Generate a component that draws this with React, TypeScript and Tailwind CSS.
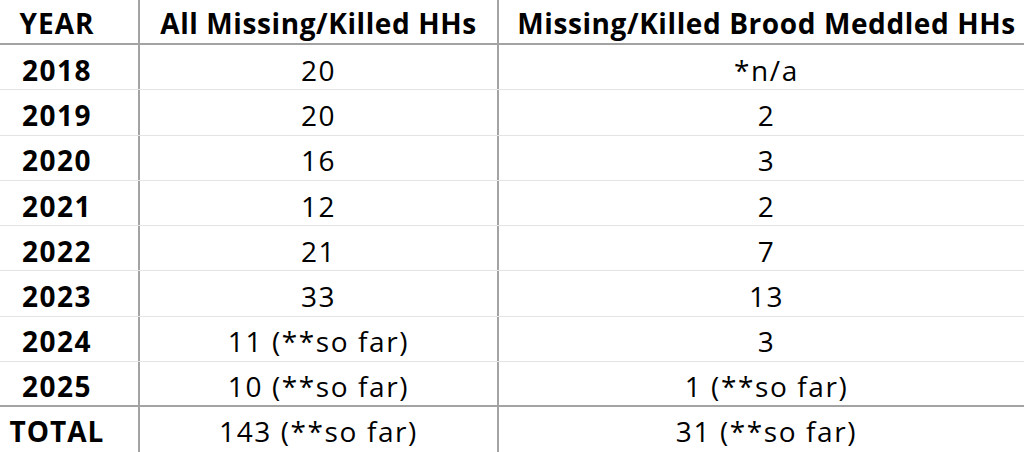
import React from "react";

const rows: [string, string, string][] = [
  ["2018", "20", "*n/a"],
  ["2019", "20", "2"],
  ["2020", "16", "3"],
  ["2021", "12", "2"],
  ["2022", "21", "7"],
  ["2023", "33", "13"],
  ["2024", "11 (**so far)", "3"],
  ["2025", "10 (**so far)", "1 (**so far)"],
];

export default function App() {
  return (
    <div
      className="w-[1024px] h-[452px] bg-white text-black overflow-hidden flex flex-col"
      style={{ fontFamily: '"Open Sans", Lato, sans-serif' }}
    >
      <div className="flex h-[45px] border-b-2 border-[#a3a3a3] font-bold text-[28px] leading-none tracking-[0.6px]">
        <div className="w-[140px] shrink-0 border-r-2 border-[#a3a3a3] flex items-center justify-center pr-[24px] pt-[3px] tracking-[1px]">YEAR</div>
        <div className="w-[359px] shrink-0 border-r-2 border-[#a3a3a3] flex items-center justify-center pt-[3px]">All Missing/Killed HHs</div>
        <div className="flex-1 flex items-center justify-center pl-[10px] pt-[3px]">Missing/Killed Brood Meddled HHs</div>
      </div>
      {rows.map((r, i) => (
        <div
          key={r[0]}
          className={`flex h-[45.3px] text-[28px] leading-none ${i === rows.length - 1 ? "border-b-2 border-[#a3a3a3]" : "border-b border-[#e4e4e4]"}`}
        >
          <div className="w-[140px] shrink-0 border-r-2 border-[#a3a3a3] flex items-center justify-center pr-[24px] pt-[5px] font-bold tracking-[1.5px]">{r[0]}</div>
          <div className="w-[359px] shrink-0 border-r-2 border-[#a3a3a3] flex items-center justify-center pt-[5px] tracking-[1.6px]">{r[1]}</div>
          <div className="flex-1 flex items-center justify-center pl-[10px] pt-[5px] tracking-[1.6px]">{r[2]}</div>
        </div>
      ))}
      <div className="flex flex-1 text-[28px] leading-none">
        <div className="w-[140px] shrink-0 border-r-2 border-[#a3a3a3] flex items-center justify-center pr-[24px] pt-[3px] font-bold tracking-[1px]">TOTAL</div>
        <div className="w-[359px] shrink-0 border-r-2 border-[#a3a3a3] flex items-center justify-center pt-[3px] tracking-[1.6px]">143 (**so far)</div>
        <div className="flex-1 flex items-center justify-center pl-[10px] pt-[3px] tracking-[1.6px]">31 (**so far)</div>
      </div>
    </div>
  );
}
